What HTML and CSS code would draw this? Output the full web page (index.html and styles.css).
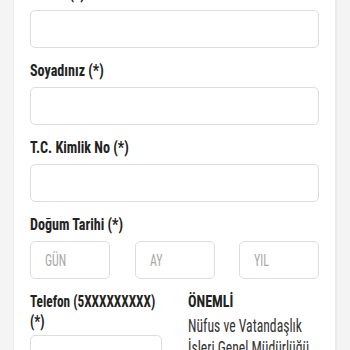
FILE: index.html
```html
<!DOCTYPE html>
<html lang="tr">
<head>
<meta charset="utf-8">
<link rel="stylesheet" href="styles.css">
</head>
<body>
<div class="card">
  <form class="form">
    <label class="label label-first">Adınız (*)</label>
    <div class="input"></div>
    <label class="label">Soyadınız (*)</label>
    <div class="input"></div>
    <label class="label">T.C. Kimlik No (*)</label>
    <div class="input"></div>
    <label class="label">Doğum Tarihi (*)</label>
    <div class="date-row">
      <div class="input small"><span class="ph">GÜN</span></div>
      <div class="input small"><span class="ph">AY</span></div>
      <div class="input small"><span class="ph">YIL</span></div>
    </div>
    <div class="two-col">
      <div class="col">
        <label class="label label-tight">Telefon (5XXXXXXXXX)<br>(*)</label>
        <div class="input"></div>
      </div>
      <div class="col info">
        <div class="label info-title">ÖNEMLİ</div>
        <p class="info-text">Nüfus ve Vatandaşlık İşleri Genel Müdürlüğü kayıtlarınızla uyumlu olmalıdır.</p>
      </div>
    </div>
  </form>
</div>
</body>
</html>
```
FILE: styles.css
```css
html, body {
  margin: 0;
  padding: 0;
  background: #f4f4f4;
  height: 350px;
  overflow: hidden;
}
body {
  font-family: "Roboto Condensed", "DejaVu Sans Condensed", sans-serif;
  color: #222;
}
.card {
  margin: 0 13px;
  background: #fff;
  border-right: 2px solid #ececec;
  border-left: 1px solid #efefef;
  height: 400px;
  padding: 0 16px;
}
.form {
  display: flex;
  flex-direction: column;
}
.label {
  display: block;
  font-weight: bold;
  font-size: 17px;
  line-height: 20px;
  margin-top: 12px;
  margin-bottom: 7px;
  color: #222;
  white-space: nowrap;
  transform: scaleX(0.83);
  transform-origin: left top;
}
.label-first {
  margin-top: -17px;
}
.label-tight {
  transform: scaleX(0.78);
}
.input {
  height: 36px;
  border: 1px solid #ddd;
  border-radius: 5px;
  background: #fff;
  display: flex;
  align-items: center;
  padding: 0 14px;
}
.ph {
  display: inline-block;
  color: #a8a8a8;
  font-size: 16px;
  transform: scaleX(0.75);
  transform-origin: left center;
}
.date-row {
  display: flex;
  justify-content: space-between;
}
.input.small {
  width: 50px;
}
.two-col {
  display: grid;
  grid-template-columns: 132px 1fr;
  column-gap: 26px;
}
.two-col .label {
  margin-bottom: 4px;
}
.info-title {
  margin-bottom: 5px;
}
.info-text {
  margin: 0;
  width: calc(100% / 0.72);
  font-size: 19px;
  line-height: 22px;
  color: #333;
  transform: scaleX(0.72);
  transform-origin: left top;
}
```
